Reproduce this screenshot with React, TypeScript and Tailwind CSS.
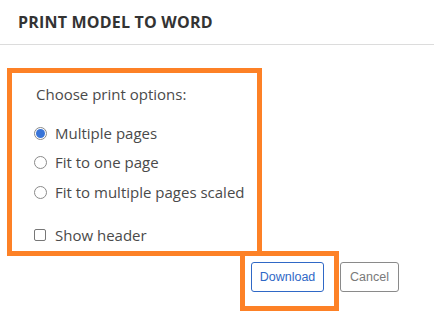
import React from 'react';

const Radio: React.FC<{ checked?: boolean; label: string }> = ({ checked, label }) => (
  <label className="flex h-5 items-center gap-[8px]">
    <span className="flex h-[13px] w-[13px] items-center justify-center rounded-full border border-[#8a8a8a] bg-white">
      {checked && <span className="h-[9px] w-[9px] rounded-full bg-[#3874d8]" />}
    </span>
    <span>{label}</span>
  </label>
);

const App: React.FC = () => {
  return (
    <div className="h-[329px] w-[434px] bg-white font-['Open_Sans',sans-serif] text-[#4a4a4a]">
      <div className="flex h-[45px] items-center border-b border-[#dcdcdc] px-[18px]">
        <h1 className="text-[16px] font-bold tracking-[0.2px] text-[#333]">PRINT MODEL TO WORD</h1>
      </div>

      <div className="ml-[7px] mt-[23px] h-[188px] w-[255px] border-[5px] border-[#fd8126] pl-[22px] pt-[11px] text-[15px]">
        <p className="pl-[2px] leading-5">Choose print options:</p>

        <div className="mt-[19px] flex flex-col gap-[9.5px]">
          <Radio checked label="Multiple pages" />
          <Radio label="Fit to one page" />
          <Radio label="Fit to multiple pages scaled" />
        </div>

        <label className="mt-[23px] flex h-5 items-center gap-[9px]">
          <span className="h-[12px] w-[12px] rounded-[2px] border border-[#777] bg-white" />
          <span>Show header</span>
        </label>
      </div>

      <div className="-mt-[5px] ml-[240px] flex items-start">
        <div className="h-[60px] w-[99px] border-[5px] border-[#fd8126] pl-[6px] pt-[6px]">
          <button className="h-[30px] w-[73px] rounded-[3px] border border-[#2f68c6] bg-white font-['Liberation_Sans',Arial,sans-serif] text-[12.5px] text-[#2f68c6]">
            Download
          </button>
        </div>
        <button className="ml-px mt-[11px] h-[30px] w-[59px] rounded-[3px] border border-[#8a8a8a] bg-white font-['Liberation_Sans',Arial,sans-serif] text-[12.5px] text-[#7a7a7a]">
          Cancel
        </button>
      </div>
    </div>
  );
};

export default App;
